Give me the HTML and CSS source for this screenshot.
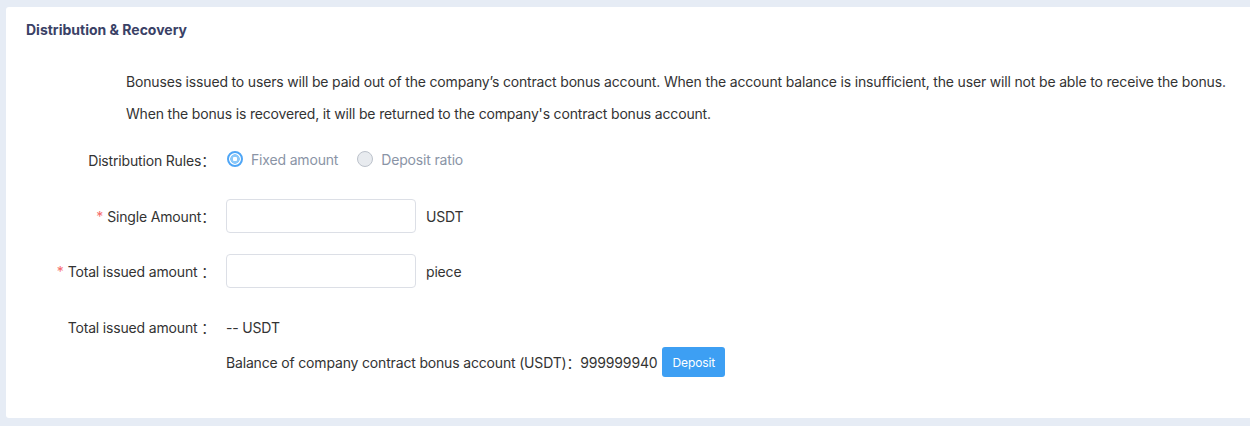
FILE: index.html
```html
<!DOCTYPE html>
<html>
<head>
<meta charset="utf-8">
<link rel="stylesheet" href="styles.css">
</head>
<body>
<div class="card">
  <div class="card-title">Distribution &amp; Recovery</div>
  <div class="desc">
    <p>Bonuses issued to users will be paid out of the company’s contract bonus account. When the account balance is insufficient, the user will not be able to receive the bonus.</p>
    <p>When the bonus is recovered, it will be returned to the company's contract bonus account.</p>
  </div>
  <div class="form">
    <div class="row row-rules">
      <div class="label">Distribution Rules：</div>
      <div class="content radios">
        <label class="radio"><span class="dot checked"></span><span class="radio-text">Fixed amount</span></label>
        <label class="radio"><span class="dot"></span><span class="radio-text">Deposit ratio</span></label>
      </div>
    </div>
    <div class="row row-input">
      <div class="label"><span class="req">*</span>Single Amount：</div>
      <div class="content"><span class="input"></span><span class="unit">USDT</span></div>
    </div>
    <div class="row row-input">
      <div class="label"><span class="req">*</span>Total issued amount ：</div>
      <div class="content"><span class="input"></span><span class="unit">piece</span></div>
    </div>
    <div class="row row-text">
      <div class="label">Total issued amount ：</div>
      <div class="content">-- USDT</div>
    </div>
    <div class="row row-balance">
      <div class="label"></div>
      <div class="content">Balance of company contract bonus account (USDT)：999999940<button class="btn">Deposit</button></div>
    </div>
  </div>
</div>
</body>
</html>
```
FILE: styles.css
```css
html, body {
  margin: 0;
  padding: 0;
  background: #e6ecf5;
  font-family: Inter, "Noto Sans CJK SC", sans-serif;
  color: #333;
  font-size: 14px;
  letter-spacing: -0.17px;
}
.card {
  margin: 7px 0 0 6px;
  width: 1250px;
  height: 411px;
  background: #fff;
  border-radius: 3px;
  box-sizing: border-box;
}
.card-title {
  padding: 13px 20px 0;
  line-height: 20px;
  font-weight: 700;
  color: #3a4166;
  font-size: 14px;
  letter-spacing: 0;
}
.desc {
  margin-top: 26px;
  padding-left: 120px;
}
.desc p {
  margin: 0;
  line-height: 32px;
  color: #333;
}
.form {
  margin-top: 14px;
}
.row {
  display: flex;
  align-items: center;
}
.label {
  width: 209px;
  flex: none;
  text-align: right;
  white-space: nowrap;
  color: #333;
}
.req {
  color: #f56c6c;
  margin-right: 4px;
}
.content {
  margin-left: 11px;
  display: flex;
  align-items: center;
  white-space: nowrap;
}
.row-rules { height: 32px; }
.row-input { height: 34px; }
.row-rules + .row-input { margin-top: 23px; }
.row-input + .row-input { margin-top: 21px; }
.row-text { height: 32px; margin-top: 23px; }
.row-balance { height: 32px; margin-top: 3px; }
.radio {
  display: flex;
  align-items: center;
  margin-right: 18px;
  margin-left: 1px;
}
.dot {
  width: 16px;
  height: 16px;
  border-radius: 50%;
  box-sizing: border-box;
  border: 1px solid #bcc2cb;
  background: #e8ebef;
  margin-right: 8px;
  margin-top: -2px;
}
.dot.checked {
  border: 2px solid #4fa6f6;
  background: radial-gradient(circle, #fff 0 2px, #8ac8fa 2.5px 4.5px, #fff 5px);
}
.radio-text {
  color: #8a94a6;
  margin-top: -2px;
}
.input {
  display: block;
  width: 190px;
  height: 34px;
  box-sizing: border-box;
  border: 1px solid #dcdfe6;
  border-radius: 4px;
}
.unit {
  margin-left: 10px;
}
.btn {
  margin-left: 5px;
  height: 30px;
  padding: 0 10px;
  border: none;
  border-radius: 3px;
  background: #3d9ff3;
  color: #fff;
  font-family: Inter, sans-serif;
  font-size: 12px;
  letter-spacing: -0.1px;
}
```
